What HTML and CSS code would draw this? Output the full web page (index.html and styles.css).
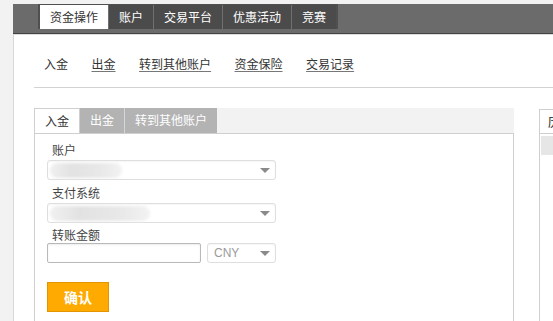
FILE: index.html
```html
<!DOCTYPE html>
<html lang="zh-CN">
<head>
  <meta charset="UTF-8" />
  <meta name="viewport" content="width=device-width, initial-scale=1" />
  <title>资金操作</title>
  <link rel="stylesheet" href="styles.css">
</head>
<body>
  <div class="page">
    <div class="topbar">
      <ul class="main-tabs">
        <li class="active">资金操作</li>
        <li>账户</li>
        <li>交易平台</li>
        <li>优惠活动</li>
        <li>竞赛</li>
      </ul>
    </div>

    <div class="content">
      <nav class="sub-links">
        <a class="current">入金</a>
        <a href="#">出金</a>
        <a href="#">转到其他账户</a>
        <a href="#">资金保险</a>
        <a href="#">交易记录</a>
      </nav>

      <div class="panels">
        <div class="panel panel-main">
          <div class="panel-tabs">
            <span class="ptab active">入金</span>
            <span class="ptab">出金</span>
            <span class="ptab">转到其他账户</span>
          </div>
          <form class="panel-body">
            <div class="field">
              <label>账户</label>
              <div class="select">
                <span class="masked"></span>
                <span class="arrow"></span>
              </div>
            </div>
            <div class="field">
              <label>支付系统</label>
              <div class="select">
                <span class="masked wide"></span>
                <span class="arrow"></span>
              </div>
            </div>
            <div class="field">
              <label class="label-tight">转账金额</label>
              <div class="amount-row">
                <input type="text" class="amount">
                <div class="select currency">
                  <span class="currency-code">CNY</span>
                  <span class="arrow"></span>
                </div>
              </div>
            </div>
            <button type="button" class="confirm">确认</button>
          </form>
        </div>

        <div class="panel panel-side">
          <div class="side-tab">历史记录</div>
          <div class="side-row">日期</div>
        </div>
      </div>
    </div>
  </div>
</body>
</html>
```

FILE: styles.css
```css
* {
  box-sizing: border-box;
}

body {
  margin: 0;
  background: #f2f2f2;
  font-family: "Noto Sans CJK SC", "DejaVu Sans", sans-serif;
  font-size: 12px;
  color: #333;
  overflow: hidden;
}

.page {
  margin: 3px 0 0 13px;
  width: 800px;
}

/* Dark top bar with main tabs */
.topbar {
  height: 30px;
  background: #6b6b6b;
  border-bottom: 1px solid #444;
  padding-left: 25px;
}

.main-tabs {
  display: flex;
  list-style: none;
  margin: 4px 0 0;
  padding: 0;
  width: max-content;
  border: 2px solid #505050;
  border-top-width: 1px;
  border-bottom: none;
}

.main-tabs li {
  height: 24px;
  line-height: 24px;
  padding: 0 10px;
  background: #4b4b4b;
  color: #fff;
  border-left: 1px solid #707070;
}

.main-tabs li.active {
  background: #fff;
  color: #333;
  border-left: none;
}

/* Content area */
.content {
  background: #fff;
  border-left: 1px solid #d8d8d8;
  border-top: 1px solid #dcdcdc;
  padding-left: 20px;
  min-height: 300px;
}

.sub-links {
  display: flex;
  align-items: center;
  gap: 23.5px;
  height: 53px;
  padding: 4px 0 0 10px;
  border-bottom: 1px solid #d2d2d2;
}

.sub-links a {
  color: #333;
  text-decoration: underline;
  text-decoration-color: #777;
  text-underline-offset: 2px;
}

.sub-links a.current {
  text-decoration: none;
}

.panels {
  display: flex;
  margin-top: 20px;
}

/* Main panel */
.panel-main {
  width: 480px;
}

.panel-tabs {
  display: flex;
  height: 26px;
  background: #f2f2f2;
  border-bottom: 1px solid #cfcfcf;
}

.ptab {
  height: 25px;
  line-height: 24px;
  padding: 0 10px;
  background: #b3b3b3;
  color: #fff;
}

.ptab + .ptab + .ptab {
  border-left: 1px solid #d6d6d6;
}

.ptab.active {
  background: #fff;
  color: #333;
  border: 1px solid #cfcfcf;
  border-bottom: none;
  line-height: 23px;
}

.panel-body {
  border: 1px solid #cfcfcf;
  border-top: none;
  padding: 3px 12px 0;
  min-height: 200px;
}

.field label {
  display: block;
  padding: 3px 0 0 5px;
  line-height: 20px;
  color: #444;
}

.field label.label-tight {
  padding-top: 2px;
  margin-bottom: -2px;
}

.select {
  display: flex;
  align-items: center;
  justify-content: space-between;
  width: 229px;
  height: 20px;
  padding: 0 5px 0 2px;
  border: 1px solid #dedede;
  border-radius: 3px;
  background: #fff;
  box-shadow: inset 0 1px 2px rgba(0, 0, 0, 0.04);
}

.masked {
  display: block;
  width: 72px;
  height: 15px;
  border-radius: 8px;
  background: linear-gradient(90deg, #f0f0f0, #e2e2e2 30%, #e8e8e8 70%, #f2f2f2);
  filter: blur(1.5px);
}

.masked.wide {
  width: 100px;
}

.arrow {
  width: 0;
  height: 0;
  border-left: 5px solid transparent;
  border-right: 5px solid transparent;
  border-top: 5px solid #8a8a8a;
}

.amount-row {
  display: flex;
  gap: 6px;
}

.amount {
  width: 154px;
  height: 20px;
  border: 1px solid #b9b9b9;
  border-radius: 2px;
  box-shadow: inset 0 1px 2px rgba(0, 0, 0, 0.08);
  font: inherit;
  padding: 0 4px;
}

.select.currency {
  width: 69px;
  padding-left: 6px;
}

.currency-code {
  color: #9a9a9a;
  font-family: "Liberation Sans", sans-serif;
  font-size: 12px;
}

.confirm {
  display: block;
  margin-top: 19px;
  width: 62px;
  height: 30px;
  background: #ffaa00;
  border: 1px solid #e39500;
  color: #fff;
  font: inherit;
  font-size: 14px;
  font-weight: 700;
  cursor: pointer;
}

/* Side panel, clipped at the window edge */
.panel-side {
  margin-left: 25px;
  width: 200px;
  border-left: 1px solid #cfcfcf;
  margin-top: 1px;
}

.side-tab {
  width: 90px;
  height: 25px;
  line-height: 24px;
  padding-left: 8px;
  border-top: 1px solid #cfcfcf;
  border-right: 1px solid #cfcfcf;
  border-bottom: 1px solid #cfcfcf;
  color: #222;
}

.side-row {
  margin: 2px 0 0 1px;
  height: 19px;
  line-height: 19px;
  padding-left: 11px;
  background: #e6e6e6;
  color: #555;
}
```
